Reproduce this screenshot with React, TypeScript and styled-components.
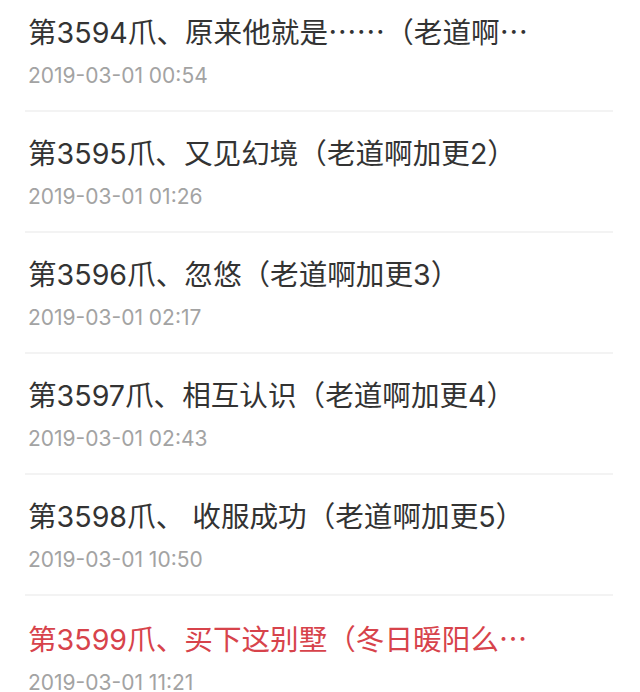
import React from "react";
import styled, { createGlobalStyle } from "styled-components";

const GlobalStyle = createGlobalStyle`
  html, body {
    margin: 0;
    padding: 0;
    background: #ffffff;
  }
  body {
    font-family: Inter, "Noto Sans CJK SC", sans-serif;
    -webkit-font-smoothing: antialiased;
  }
`;

const Viewport = styled.div`
  width: 640px;
  height: 692px;
  overflow: hidden;
  background: #ffffff;
`;

const List = styled.ul`
  list-style: none;
  margin: -11px 0 0 0;
  padding: 0 27px 0 25px;
`;

const Item = styled.li`
  display: flex;
  flex-direction: column;
  gap: 8px;
  padding: 22px 0 19px 3px;
  border-bottom: 2px solid #f3f3f3;
`;

const Title = styled.div<{ $active?: boolean }>`
  font-family: Inter, "Noto Sans CJK SC", sans-serif;
  font-size: 28.6px;
  line-height: 40px;
  color: ${(p) => (p.$active ? "#d7434b" : "#333333")};
  white-space: nowrap;
  overflow: hidden;
`;

const Dots = styled.span`
  font-family: "Noto Sans CJK SC", sans-serif;
`;

const DateText = styled.div`
  font-family: Inter, "Noto Sans CJK SC", sans-serif;
  font-size: 21px;
  line-height: 30px;
  color: #a3a3a3;
`;

type Chapter = { parts: string[]; date: string; active?: boolean };

const chapters: Chapter[] = [
  { parts: ["第3594爪、原来他就是", "……", "（老道啊", "…"], date: "2019-03-01 00:54" },
  { parts: ["第3595爪、又见幻境（老道啊加更2）"], date: "2019-03-01 01:26" },
  { parts: ["第3596爪、忽悠（老道啊加更3）"], date: "2019-03-01 02:17" },
  { parts: ["第3597爪、相互认识（老道啊加更4）"], date: "2019-03-01 02:43" },
  { parts: ["第3598爪、 收服成功（老道啊加更5）"], date: "2019-03-01 10:50" },
  { parts: ["第3599爪、买下这别墅（冬日暖阳么", "…"], date: "2019-03-01 11:21", active: true },
];

export default function App() {
  return (
    <>
      <GlobalStyle />
      <Viewport>
        <List>
          {chapters.map((c) => (
            <Item key={c.date}>
              <Title $active={c.active}>
                {c.parts.map((p, i) =>
                  p.startsWith("…") ? <Dots key={i}>{p}</Dots> : <React.Fragment key={i}>{p}</React.Fragment>
                )}
              </Title>
              <DateText>{c.date}</DateText>
            </Item>
          ))}
        </List>
      </Viewport>
    </>
  );
}
